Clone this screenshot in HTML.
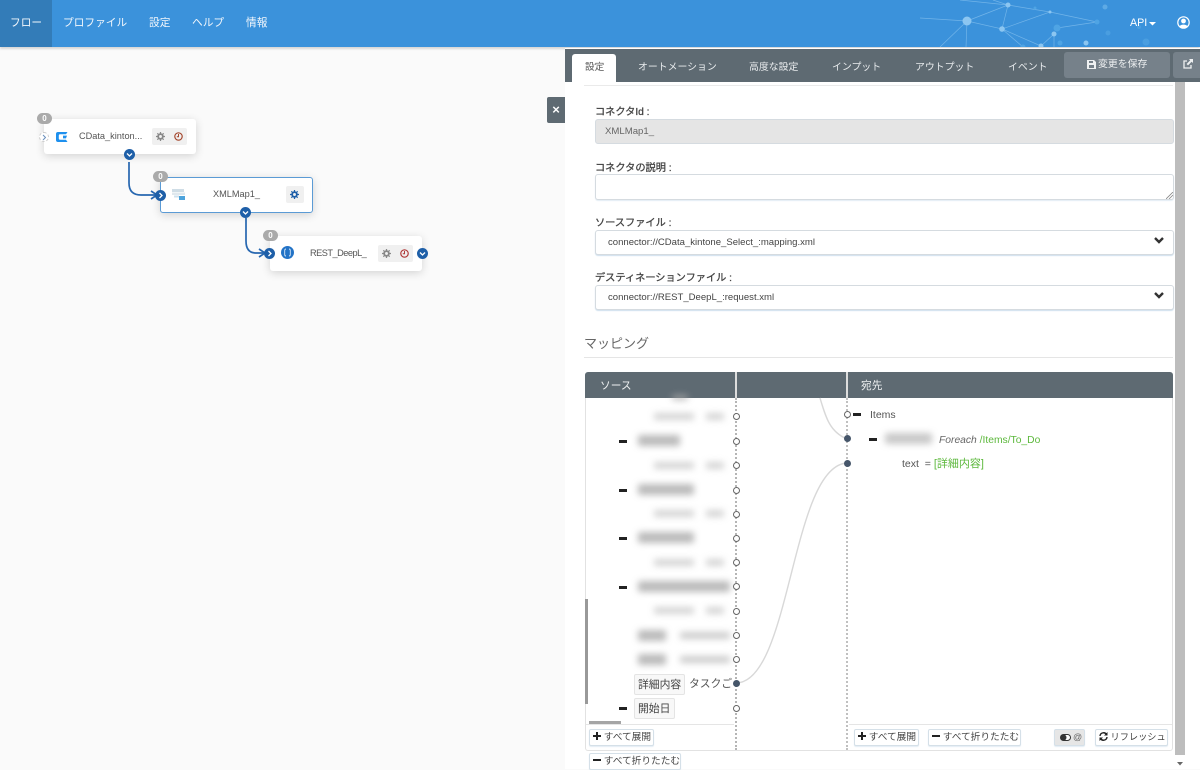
<!DOCTYPE html>
<html lang="ja"><head><meta charset="utf-8"><title>フロー</title>
<style>
*{box-sizing:border-box}
html,body{margin:0;padding:0}
body{width:1200px;height:769px;overflow:hidden;position:relative;background:#fafafa;font-family:"Liberation Sans","Noto Sans CJK JP",sans-serif;color:#555;font-size:11px}
.a{position:absolute;white-space:nowrap}
.nav{top:15px;font-size:10.7px;color:#f2f7fc;line-height:16px}
.tab{top:60px;font-size:9.9px;color:#e9ecee;line-height:16px}
.lab{left:595px;font-size:10.2px;color:#444;line-height:14px;-webkit-text-stroke:.3px #444}
.inp{left:595px;width:579px;border:1px solid #d5dbe0;border-radius:3px;background:#fff}
.sel{height:25px;box-shadow:0 1px 1px #cfe0ee;font-size:9.55px;color:#444;line-height:23px;padding-left:12px}
.node{background:#fff;border-radius:3px;box-shadow:0 2px 9px rgba(0,0,0,.16)}
.badge{width:15px;height:11px;border-radius:6px;background:#aaa;color:#fff;font-size:8px;font-weight:bold;text-align:center;line-height:11px}
.dot{width:11px;height:11px;border-radius:50%;background:#1e5fa8;color:#fff}
.dot svg{display:block;width:11px;height:11px}
.ico{background:#f0f0f0;height:17px;border-radius:2px}
.c{width:7px;height:7px;border-radius:50%;background:#fff;border:1px solid #666}
.f{width:7px;height:7px;border-radius:50%;background:#46566a}
.m{width:8px;height:2.5px;background:#222}
.bl{background:#aaa;filter:blur(3.5px);border-radius:2px;opacity:.8}
.key{height:21px;border:1px solid #e4e4e4;background:#f8f8f8;border-radius:2px;font-size:10.8px;color:#444;line-height:20px;padding:0 3px}
.btn{height:17px;border:1px solid #d5e0e8;border-radius:2px;background:#fff;font-size:9.7px;color:#444;line-height:15px;padding:0 3px;box-shadow:0 1px 1px #e3edf4}
.btn svg{vertical-align:0}
</style></head><body>

<!-- top bar -->
<div class="a" style="left:0;top:0;width:1200px;height:47px;background:#3b92db;box-shadow:0 2px 2px rgba(0,0,0,.14)"></div>
<div class="a" style="left:0;top:0;width:52px;height:47px;background:#337cb8"></div>
<svg class="a" style="left:920px;top:0" width="280" height="47" viewBox="0 0 280 47">
<g stroke="#7fbdec" stroke-width=".7" fill="none" opacity=".8">
<path d="M47 21 L88 5 L82 29 L47 21 M88 5 L130 12 L82 29 L121 46 M130 12 L177 22 M82 29 L103 47 M134 34 L121 46 M134 34 V47 M177 22 L137 28 M0 18 L47 21 M47 21 L20 47 M47 21 L46 47 M73 0 L88 5 M40 0 L88 5"/>
</g>
<circle cx="47" cy="21" r="4.5" fill="#8cc6f1"/><circle cx="88" cy="5" r="2.5" fill="#8cc6f1"/><circle cx="82" cy="29" r="2.8" fill="#8cc6f1"/>
<circle cx="130" cy="12" r="1.5" fill="#8cc6f1"/><circle cx="137" cy="28" r="3.5" fill="#4fa4e4"/><circle cx="134" cy="34" r="2.5" fill="#8cc6f1"/>
<circle cx="177" cy="22" r="2.5" fill="#4fa4e4"/><circle cx="115" cy="8" r="1.5" fill="#4fa4e4"/><circle cx="121" cy="46" r="2.5" fill="#8cc6f1"/>
<circle cx="185" cy="7" r="2.5" fill="#5eaae5"/><circle cx="166" cy="43" r="2.5" fill="#8cc6f1"/><circle cx="140" cy="43" r="2.5" fill="#4fa4e4"/><circle cx="188" cy="33" r="2.5" fill="#4a9ee0"/><circle cx="226" cy="42" r="3.5" fill="#4a9ee0"/><circle cx="103" cy="47" r="2.5" fill="#4fa4e4"/><circle cx="219" cy="27" r="2" fill="#4a9ee0"/>
</svg>
<div class="a nav" style="left:10px">フロー</div>
<div class="a nav" style="left:63px">プロファイル</div>
<div class="a nav" style="left:149px">設定</div>
<div class="a nav" style="left:192px">ヘルプ</div>
<div class="a nav" style="left:246px">情報</div>
<div class="a nav" style="left:1130px;top:15px;color:#fff">API</div>
<svg class="a" style="left:1149px;top:22px" width="7" height="4"><path d="M0 0H7L3.5 3.5Z" fill="#fff"/></svg>
<svg class="a" style="left:1177px;top:16px" width="13" height="13" viewBox="0 0 13 13"><circle cx="6.5" cy="6.5" r="5.7" fill="none" stroke="#fff" stroke-width="1.2"/><circle cx="6.5" cy="5" r="2.4" fill="#fff"/><path d="M2.5 10.5C3.5 8 9.5 8 10.5 10.5L8 12H5Z" fill="#fff"/></svg>

<!-- right panel -->
<div class="a" style="left:565px;top:48px;width:635px;height:721px;background:#fff"></div>
<div class="a" style="left:565px;top:49px;width:635px;height:33px;background:#5e6a72"></div>
<div class="a" style="left:572px;top:54px;width:44px;height:28px;background:#fff;border-radius:3px 3px 0 0"></div>
<div class="a tab" style="left:585px;color:#555;font-size:9.7px">設定</div>
<div class="a tab" style="left:638px">オートメーション</div>
<div class="a tab" style="left:749px">高度な設定</div>
<div class="a tab" style="left:832px">インプット</div>
<div class="a tab" style="left:915px">アウトプット</div>
<div class="a tab" style="left:1008px">イベント</div>
<div class="a" style="left:1064px;top:52px;width:106px;height:26px;background:#76818a;border-radius:3px"></div>
<svg class="a" style="left:1087px;top:60px" width="9" height="9" viewBox="0 0 9 9"><path d="M0 0H7L9 2V9H0ZM2 1V3H6V1ZM2 5V8H7V5Z" fill="#eef0f1" fill-rule="evenodd"/></svg>
<div class="a" style="left:1098px;top:57px;font-size:9.9px;color:#eef0f1;line-height:16px">変更を保存</div>
<div class="a" style="left:1173px;top:52px;width:27px;height:26px;background:#76818a;border-radius:3px 0 0 3px"></div>
<svg class="a" style="left:1183px;top:59px" width="10" height="10" viewBox="0 0 10 10"><path d="M4 2H1V9H8V6" fill="none" stroke="#eef0f1" stroke-width="1.3"/><path d="M6 0H10V4L8.6 2.8 5 6.4 3.6 5 7.2 1.4Z" fill="#eef0f1"/></svg>

<div class="a" style="left:584px;top:85px;width:589px;height:1px;background:#eaeaea"></div>
<div class="a" style="left:1175px;top:82px;width:10px;height:673px;background:#bdbdbd"></div>
<svg class="a" style="left:1177px;top:762px" width="6" height="4"><path d="M0 0H6L3 3.5Z" fill="#666"/></svg>

<!-- close -->
<div class="a" style="left:547px;top:97px;width:18px;height:26px;background:#5e6a72;border-radius:2px 0 0 2px;color:#fff;text-align:center;font-size:13px;font-weight:bold;line-height:26px">×</div>

<!-- form -->
<div class="a lab" style="top:106px">コネクタId :</div>
<div class="a inp" style="top:119px;height:25px;background:#e5e5e5;color:#666;font-size:9.6px;line-height:24px;padding-left:9px">XMLMap1_</div>
<div class="a lab" style="top:162px">コネクタの説明 :</div>
<div class="a inp" style="top:174px;height:26px;box-shadow:0 1px 1px #e3edf4"></div>
<svg class="a" style="left:1166px;top:192px" width="7" height="7"><path d="M0 7L7 0M3 7L7 3" stroke="#888" stroke-width=".8"/></svg>
<div class="a lab" style="top:217px">ソースファイル :</div>
<div class="a inp sel" style="top:230px">connector://CData_kintone_Select_:mapping.xml</div>
<svg class="a" style="left:1154px;top:237px" width="10" height="7" viewBox="0 0 10 7"><path d="M1 1L5 5L9 1" fill="none" stroke="#333" stroke-width="2.4"/></svg>
<div class="a lab" style="top:272px">デスティネーションファイル :</div>
<div class="a inp sel" style="top:285px">connector://REST_DeepL_:request.xml</div>
<svg class="a" style="left:1154px;top:292px" width="10" height="7" viewBox="0 0 10 7"><path d="M1 1L5 5L9 1" fill="none" stroke="#333" stroke-width="2.4"/></svg>
<div class="a" style="left:584px;top:334px;font-size:13px;color:#666;line-height:20px">マッピング</div>
<div class="a" style="left:584px;top:357px;width:589px;height:1px;background:#e5e5e5"></div>

<!-- mapping box -->
<div class="a" style="left:585px;top:372px;width:588px;height:379px;border:1px solid #e2e2e2;border-top:0;border-radius:3px"></div>
<div class="a" style="left:585px;top:372px;width:588px;height:26px;background:#5e6a72;border-radius:3px 3px 0 0"></div>
<div class="a" style="left:600px;top:378px;font-size:10.7px;color:#eef0f1;line-height:16px">ソース</div>
<div class="a" style="left:861px;top:378px;font-size:10.7px;color:#eef0f1;line-height:16px">宛先</div>
<div class="a" style="left:735px;top:398px;width:2px;height:352px;border-left:2px dotted #b5b5b5"></div>
<div class="a" style="left:846px;top:398px;width:2px;height:352px;border-left:2px dotted #c0c0c0"></div>
<div class="a" style="left:735px;top:372px;width:2px;height:26px;background:#ddd"></div>
<div class="a" style="left:846px;top:372px;width:2px;height:26px;background:#ddd"></div>

<!-- curves -->
<svg class="a" style="left:736px;top:396px" width="112" height="294" viewBox="0 0 112 294">
<path d="M84 2C90 22 94 36 111 43" fill="none" stroke="#d8d8d8" stroke-width="1.4"/>
<path d="M0 287C55 287 55 70 111 67" fill="none" stroke="#d8d8d8" stroke-width="1.4"/>
</svg>

<!-- left list -->
<div class="a bl" style="left:672px;top:395px;width:16px;height:5px"></div>
<div class="a bl" style="left:654px;top:413px;width:40px;height:7px;opacity:.5"></div><div class="a bl" style="left:706px;top:413px;width:18px;height:7px;opacity:.5"></div>
<div class="a m" style="left:619px;top:440px"></div><div class="a bl" style="left:638px;top:435px;width:42px;height:11px"></div>
<div class="a bl" style="left:654px;top:462px;width:40px;height:7px;opacity:.5"></div><div class="a bl" style="left:706px;top:462px;width:18px;height:7px;opacity:.5"></div>
<div class="a m" style="left:619px;top:489px"></div><div class="a bl" style="left:638px;top:484px;width:56px;height:11px"></div>
<div class="a bl" style="left:654px;top:510px;width:40px;height:7px;opacity:.5"></div><div class="a bl" style="left:706px;top:510px;width:18px;height:7px;opacity:.5"></div>
<div class="a m" style="left:619px;top:537px"></div><div class="a bl" style="left:638px;top:532px;width:56px;height:11px"></div>
<div class="a bl" style="left:654px;top:559px;width:40px;height:7px;opacity:.5"></div><div class="a bl" style="left:706px;top:559px;width:18px;height:7px;opacity:.5"></div>
<div class="a m" style="left:619px;top:586px"></div><div class="a bl" style="left:638px;top:581px;width:92px;height:11px"></div>
<div class="a bl" style="left:654px;top:607px;width:40px;height:7px;opacity:.5"></div><div class="a bl" style="left:706px;top:607px;width:18px;height:7px;opacity:.5"></div>
<div class="a bl" style="left:638px;top:630px;width:28px;height:11px"></div><div class="a bl" style="left:680px;top:632px;width:50px;height:7px;opacity:.6"></div>
<div class="a bl" style="left:638px;top:654px;width:28px;height:11px"></div><div class="a bl" style="left:680px;top:656px;width:50px;height:7px;opacity:.6"></div>
<div class="a key" style="left:634px;top:674px;width:51px">詳細内容</div>
<div class="a" style="left:689px;top:675px;font-size:10.8px;color:#555;line-height:19px;width:43px;overflow:hidden">タスクご</div>
<div class="a m" style="left:619px;top:707px"></div>
<div class="a key" style="left:634px;top:698px;width:41px">開始日</div>
<div class="a" style="left:585px;top:599px;width:3px;height:105px;background:#999"></div>
<div class="a" style="left:589px;top:721px;width:32px;height:3px;background:#a5a5a5"></div>
<div class="a" style="left:586px;top:724px;width:148px;height:1px;background:#e5e5e5"></div>
<div class="a" style="left:849px;top:724px;width:323px;height:1px;background:#e5e5e5"></div>

<!-- connector dots -->
<div class="a c" style="left:733px;top:413px"></div><div class="a c" style="left:733px;top:438px"></div><div class="a c" style="left:733px;top:462px"></div>
<div class="a c" style="left:733px;top:487px"></div><div class="a c" style="left:733px;top:511px"></div><div class="a c" style="left:733px;top:535px"></div>
<div class="a c" style="left:733px;top:559px"></div><div class="a c" style="left:733px;top:583px"></div><div class="a c" style="left:733px;top:608px"></div>
<div class="a c" style="left:733px;top:632px"></div><div class="a c" style="left:733px;top:656px"></div><div class="a f" style="left:733px;top:680px"></div><div class="a c" style="left:733px;top:705px"></div>

<!-- right tree -->
<div class="a c" style="left:844px;top:411px"></div><div class="a f" style="left:844px;top:435px"></div><div class="a f" style="left:844px;top:460px"></div>
<div class="a m" style="left:853px;top:413px"></div>
<div class="a" style="left:870px;top:408px;font-size:10.5px;color:#555;line-height:15px">Items</div>
<div class="a m" style="left:869px;top:438px"></div>
<div class="a bl" style="left:885px;top:433px;width:47px;height:11px;background:#bbb"></div>
<div class="a" style="left:939px;top:433px;font-size:10.3px;line-height:15px;color:#666"><i>Foreach</i> <span style="color:#5cb83c">/Items/To_Do</span></div>
<div class="a" style="left:902px;top:457px;font-size:10.5px;line-height:15px;color:#555">text&nbsp;&nbsp;= <span style="color:#5cb83c;font-size:11px">[詳細内容]</span></div>

<!-- buttons -->
<div class="a btn" style="left:589px;top:729px;width:65px"><svg width="8" height="8" viewBox="0 0 8 8"><path d="M4 0V8M0 4H8" stroke="#222" stroke-width="2"/></svg> すべて展開</div>
<div class="a btn" style="left:589px;top:753px;width:92px"><svg width="8" height="8" viewBox="0 0 8 8"><path d="M0 4H8" stroke="#222" stroke-width="2"/></svg> すべて折りたたむ</div>
<div class="a btn" style="left:854px;top:729px;width:65px"><svg width="8" height="8" viewBox="0 0 8 8"><path d="M4 0V8M0 4H8" stroke="#222" stroke-width="2"/></svg> すべて展開</div>
<div class="a btn" style="left:928px;top:729px;width:93px"><svg width="8" height="8" viewBox="0 0 8 8"><path d="M0 4H8" stroke="#222" stroke-width="2"/></svg> すべて折りたたむ</div>
<div class="a btn" style="left:1054px;top:729px;width:31px;background:#e6e6e6;padding:0;color:#666;font-size:9px"><svg width="11" height="7" style="margin:0 2px 0 5px;vertical-align:-1px"><rect x=".5" y=".5" width="10" height="6" rx="3" fill="#fff" stroke="#333"/><circle cx="3.5" cy="3.5" r="3" fill="#333"/></svg>@</div>
<div class="a btn" style="left:1095px;top:729px;width:73px;font-size:9.2px"><svg width="9" height="9" viewBox="0 0 9 9" style="vertical-align:-1px"><path d="M1 4A3.5 3.5 0 0 1 7.5 2.5M8 5A3.5 3.5 0 0 1 1.5 6.5" fill="none" stroke="#222" stroke-width="1.4"/><path d="M8.5 0V3.5H5ZM.5 9V5.5H4Z" fill="#222"/></svg> リフレッシュ</div>

<!-- flow wires -->
<svg class="a" style="left:120px;top:150px" width="160" height="115" viewBox="0 0 160 115">
<path d="M9 12V33Q9 45 21 45H36" fill="none" stroke="#2767b0" stroke-width="1.7"/>
<path d="M31 41L37 45L31 49" fill="none" stroke="#2767b0" stroke-width="1.7"/>
<path d="M126 68V91Q126 103 136 103H144" fill="none" stroke="#2767b0" stroke-width="1.7"/>
<path d="M139 99L145 103L139 107" fill="none" stroke="#2767b0" stroke-width="1.7"/>
</svg>

<!-- node 1 -->
<div class="a node" style="left:44px;top:119px;width:152px;height:35px"></div>
<div class="a badge" style="left:37px;top:113px">0</div>
<div class="a" style="left:39px;top:132px;width:10px;height:10px;border:1px dashed #ccc;border-radius:50%;background:#fff"></div>
<svg class="a" style="left:42px;top:134px" width="5" height="7"><path d="M1 1L3.5 3.5L1 6" fill="none" stroke="#6a8fbd" stroke-width="1"/></svg>
<svg class="a" style="left:56px;top:132px" width="12" height="10" viewBox="0 0 12 10"><path d="M2 0H11.5L10 2.2H4Q2.8 2.2 2.8 3.4V6.6Q2.8 7.8 4 7.8H10L11.5 10H2Q0 10 0 8V2Q0 0 2 0Z" fill="#1e90ee"/><path d="M7 3.6H11L10 6.4H7Z" fill="#1e90ee"/></svg>
<div class="a" style="left:79px;top:129px;font-size:9.2px;color:#555;line-height:14px">CData_kinton...</div>
<div class="a ico" style="left:152px;top:128px;width:35px"></div>
<svg class="a" style="left:156px;top:132px" width="9" height="9" viewBox="0 0 10 10"><circle cx="5" cy="5" r="2.6" fill="none" stroke="#888" stroke-width="2"/><path d="M5 0V2M5 8V10M0 5H2M8 5H10M1.5 1.5L3 3M7 7L8.5 8.5M1.5 8.5L3 7M7 3L8.5 1.5" stroke="#888" stroke-width="1.4"/></svg>
<svg class="a" style="left:174px;top:132px" width="9" height="9" viewBox="0 0 9 9"><circle cx="4.5" cy="4.5" r="3.7" fill="none" stroke="#a5482f" stroke-width="1.2"/><path d="M4.5 2V4.7H2.8" fill="none" stroke="#a5482f"/></svg>
<div class="a dot" style="left:124px;top:149px"><svg viewBox="0 0 11 11"><path d="M3 4.5L5.5 7L8 4.5" fill="none" stroke="#fff" stroke-width="1.3"/></svg></div>

<!-- node 2 -->
<div class="a node" style="left:160px;top:177px;width:153px;height:36px;border:1px solid #5b9bd5"></div>
<div class="a badge" style="left:153px;top:171px">0</div>
<div class="a dot" style="left:155px;top:190px"><svg viewBox="0 0 11 11"><path d="M4.5 3L7 5.5L4.5 8" fill="none" stroke="#fff" stroke-width="1.3"/></svg></div>
<svg class="a" style="left:172px;top:189px" width="13" height="11" viewBox="0 0 13 11"><rect width="12" height="3" fill="#cfdde6"/><rect y="3.5" width="13" height="2.5" fill="#dfe8ee"/><rect x="2" y="6.5" width="5" height="2" fill="#cfe2ee"/><rect x="7" y="7" width="6" height="4" fill="#4da3dc"/></svg>
<div class="a" style="left:213px;top:187px;font-size:9.2px;color:#555;line-height:14px">XMLMap1_</div>
<div class="a ico" style="left:286px;top:186px;width:18px"></div>
<svg class="a" style="left:290px;top:190px" width="9" height="9" viewBox="0 0 10 10"><circle cx="5" cy="5" r="2.6" fill="none" stroke="#1e5fa8" stroke-width="2"/><path d="M5 0V2M5 8V10M0 5H2M8 5H10M1.5 1.5L3 3M7 7L8.5 8.5M1.5 8.5L3 7M7 3L8.5 1.5" stroke="#1e5fa8" stroke-width="1.4"/></svg>
<div class="a dot" style="left:240px;top:207px"><svg viewBox="0 0 11 11"><path d="M3 4.5L5.5 7L8 4.5" fill="none" stroke="#fff" stroke-width="1.3"/></svg></div>

<!-- node 3 -->
<div class="a node" style="left:270px;top:236px;width:152px;height:35px"></div>
<div class="a badge" style="left:263px;top:230px">0</div>
<div class="a dot" style="left:264px;top:248px"><svg viewBox="0 0 11 11"><path d="M4.5 3L7 5.5L4.5 8" fill="none" stroke="#fff" stroke-width="1.3"/></svg></div>
<svg class="a" style="left:281px;top:246px" width="13" height="13" viewBox="0 0 13 13"><circle cx="6.5" cy="6.5" r="6.5" fill="#2373c6"/><path d="M5 3Q3.7 3 3.7 4.5V8.5Q3.7 10 5 10M8 3Q9.3 3 9.3 4.5V8.5Q9.3 10 8 10" fill="none" stroke="#d5e6f6" stroke-width=".9"/></svg>
<div class="a" style="left:310px;top:246px;font-size:9.2px;letter-spacing:-.5px;color:#555;line-height:14px">REST_DeepL_</div>
<div class="a ico" style="left:378px;top:245px;width:35px"></div>
<svg class="a" style="left:382px;top:249px" width="9" height="9" viewBox="0 0 10 10"><circle cx="5" cy="5" r="2.6" fill="none" stroke="#888" stroke-width="2"/><path d="M5 0V2M5 8V10M0 5H2M8 5H10M1.5 1.5L3 3M7 7L8.5 8.5M1.5 8.5L3 7M7 3L8.5 1.5" stroke="#888" stroke-width="1.4"/></svg>
<svg class="a" style="left:400px;top:249px" width="9" height="9" viewBox="0 0 9 9"><circle cx="4.5" cy="4.5" r="3.7" fill="none" stroke="#b03a3a" stroke-width="1.2"/><path d="M4.5 2V4.7H2.8" fill="none" stroke="#b03a3a"/></svg>
<div class="a dot" style="left:417px;top:248px"><svg viewBox="0 0 11 11"><path d="M3 4.5L5.5 7L8 4.5" fill="none" stroke="#fff" stroke-width="1.3"/></svg></div>

</body></html>
